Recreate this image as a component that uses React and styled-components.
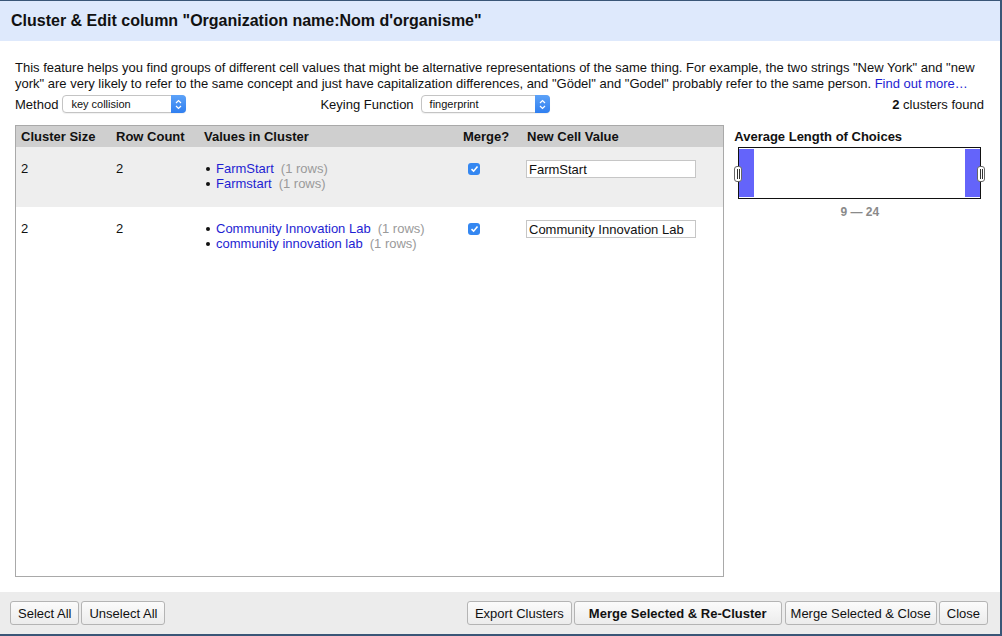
import React from "react";
import styled, { createGlobalStyle } from "styled-components";

const Global = createGlobalStyle`
  html, body { margin: 0; padding: 0; background: #fff; }
  body { font-family: "Liberation Sans", Arial, Helvetica, sans-serif; font-size: 13px; color: #111; }
  * { box-sizing: border-box; }
`;

const Dialog = styled.div`
  width: 1002px;
  height: 636px;
  border-top: 1px solid #3a5677;
  border-right: 2px solid #3a5677;
  border-bottom: 2px solid #3a5677;
  display: flex;
  flex-direction: column;
  background: #fff;
`;

const Header = styled.div`
  height: 40px;
  background: #dee9fc;
  display: flex;
  align-items: center;
  padding-left: 11px;
  font-size: 16px;
  font-weight: bold;
  color: #111;
`;

const Body = styled.div`
  flex: 1;
  display: flex;
  flex-direction: column;
  padding: 19px 16px 15px 15px;
  min-height: 0;
`;

const Intro = styled.p`
  margin: 0;
  line-height: 16px;
  font-size: 13px;
`;

const Link = styled.a`
  color: #1e1ed2;
  text-decoration: none;
`;

const Controls = styled.div`
  display: flex;
  align-items: center;
  margin-top: 3px;
  height: 18px;
`;

const ControlGroup = styled.div`
  display: flex;
  align-items: center;
  gap: ${(p) => p.$gap || 4}px;
  margin-left: ${(p) => p.$offset || 0}px;
`;

const Select = styled.div`
  position: relative;
  width: ${(p) => p.$width}px;
  height: 18px;
  border: 1px solid #c4c4c4;
  border-radius: 4px;
  background: #fff;
  font-size: 11px;
  line-height: 16px;
  padding-left: 8px;
  color: #111;
  box-shadow: 0 1px 1px rgba(0, 0, 0, 0.06);
`;

const SelectArrow = styled.span`
  position: absolute;
  top: -1px;
  right: -1px;
  width: 15px;
  height: 18px;
  border-radius: 0 4px 4px 0;
  background: linear-gradient(#5ca2f8, #2f7ff0);
  display: flex;
  align-items: center;
  justify-content: center;
`;

const Found = styled.div`
  margin-left: auto;
`;

const Main = styled.div`
  flex: 1;
  display: flex;
  gap: 10px;
  margin-top: 12px;
  min-height: 0;
`;

const TablePanel = styled.div`
  width: 710px;
  border: 1px solid #a9a9a9;
  background: #fff;
`;

const Row = styled.div`
  display: grid;
  grid-template-columns: 95px 88px 259px 64px 1fr;
  background: ${(p) => p.$bg};
`;

const HeadCell = styled.div`
  height: 21px;
  line-height: 21px;
  padding: 0 5px;
  font-weight: bold;
  background: #cfcfcf;
`;

const Cell = styled.div`
  padding: 14px 5px 16px;
  line-height: 15px;
  min-height: 60px;
`;

const Values = styled.ul`
  margin: 0;
  padding: 0;
  list-style: none;
`;

const ValueItem = styled.li`
  display: flex;
  align-items: center;
  padding-left: 2px;
  &::before {
    content: "";
    width: 4px;
    height: 4px;
    border-radius: 50%;
    background: #111;
    margin-right: 6px;
  }
`;

const ValueName = styled.span`
  color: #1e1ed2;
`;

const ValueCount = styled.span`
  color: #9a9a9a;
  margin-left: 7px;
`;

const Check = styled.span`
  display: inline-flex;
  align-items: center;
  justify-content: center;
  width: 12px;
  height: 12px;
  margin: 1px 0 0 5px;
  border-radius: 3px;
  background: #3487f1;
`;

const CellInput = styled.input`
  width: 170px;
  height: 18px;
  margin: -1px 0 0 -1px;
  border: 1px solid #c6c6c6;
  padding: 0 2px;
  font-family: inherit;
  font-size: 13px;
  color: #111;
  background: #fff;
  outline: none;
`;

const Side = styled.div`
  display: flex;
  flex-direction: column;
  width: 250px;
`;

const SideTitle = styled.div`
  font-weight: bold;
  line-height: 21px;
  margin-top: 1px;
`;

const Histogram = styled.div`
  position: relative;
  margin-left: 4px;
  width: 243px;
  height: 52px;
  border: 1px solid #111;
  display: flex;
  justify-content: space-between;
  background: #fff;
`;

const Bar = styled.div`
  width: 15px;
  margin: 1px 0;
  background: #6464fa;
`;

const Handle = styled.span`
  position: absolute;
  top: 18px;
  ${(p) => (p.$side === "left" ? "left: -5px;" : "right: -5px;")}
  width: 8px;
  height: 16px;
  border: 1px solid #666;
  border-radius: 3px;
  background: #fff;
  display: flex;
  justify-content: center;
  align-items: center;
  gap: 1px;
  &::before, &::after {
    content: "";
    width: 1px;
    height: 10px;
    background: #333;
  }
`;

const Range = styled.div`
  margin-left: 4px;
  width: 243px;
  text-align: center;
  color: #8a8a8a;
  font-weight: bold;
  font-size: 12px;
  margin-top: 6px;
`;

const Footer = styled.div`
  height: 42px;
  background: #ececec;
  display: flex;
  align-items: center;
  padding: 0 12px 0 10px;
  gap: 2px;
`;

const Spacer = styled.div`
  flex: 1;
`;

const Button = styled.button`
  height: 24px;
  padding: 0 ${(p) => p.$pad ?? 7}px;
  font-family: inherit;
  font-size: 13px;
  font-weight: ${(p) => (p.$primary ? "bold" : "normal")};
  color: #111;
  border: 1px solid #b4b4b4;
  border-radius: 3px;
  background: linear-gradient(#fbfbfb, #ececec);
  margin-left: ${(p) => p.$gapLeft || 0}px;
`;

const Arrows = () => (
  <svg width="7" height="11" viewBox="0 0 7 11">
    <path d="M1 4 L3.5 1.5 L6 4 M1 7 L3.5 9.5 L6 7" fill="none" stroke="#fff" strokeWidth="1.2" />
  </svg>
);

const Tick = () => (
  <svg width="9" height="8" viewBox="0 0 9 8">
    <path d="M1.5 4.2 L3.6 6.2 L7.5 1.5" fill="none" stroke="#fff" strokeWidth="1.6" />
  </svg>
);

const clusters = [
  {
    size: 2,
    count: 2,
    values: [
      ["FarmStart", 1],
      ["Farmstart", 1],
    ],
    value: "FarmStart",
    bg: "#eeeeee",
  },
  {
    size: 2,
    count: 2,
    values: [
      ["Community Innovation Lab", 1],
      ["community innovation lab", 1],
    ],
    value: "Community Innovation Lab",
    bg: "#ffffff",
  },
];

export default function App() {
  return (
    <>
      <Global />
      <Dialog>
        <Header>Cluster &amp; Edit column "Organization name:Nom d'organisme"</Header>
        <Body>
          <Intro>
            This feature helps you find groups of different cell values that might be alternative representations of the same thing. For example, the two strings "New York" and "new york" are very likely to refer to the same concept and just have capitalization differences, and "Gödel" and "Godel" probably refer to the same person. <Link href="#">Find out more…</Link>
          </Intro>
          <Controls>
            <ControlGroup>
              <span>Method</span>
              <Select $width={124}>
                key collision
                <SelectArrow><Arrows /></SelectArrow>
              </Select>
            </ControlGroup>
            <ControlGroup $offset={134} $gap={7}>
              <span>Keying Function</span>
              <Select $width={129}>
                fingerprint
                <SelectArrow><Arrows /></SelectArrow>
              </Select>
            </ControlGroup>
            <Found><b>2</b> clusters found</Found>
          </Controls>
          <Main>
            <TablePanel>
              <Row>
                <HeadCell>Cluster Size</HeadCell>
                <HeadCell>Row Count</HeadCell>
                <HeadCell>Values in Cluster</HeadCell>
                <HeadCell>Merge?</HeadCell>
                <HeadCell>New Cell Value</HeadCell>
              </Row>
              {clusters.map((c, i) => (
                <Row key={i} $bg={c.bg}>
                  <Cell>{c.size}</Cell>
                  <Cell>{c.count}</Cell>
                  <Cell>
                    <Values>
                      {c.values.map(([v, n]) => (
                        <ValueItem key={v}>
                          <ValueName>{v}</ValueName>
                          <ValueCount>({n} rows)</ValueCount>
                        </ValueItem>
                      ))}
                    </Values>
                  </Cell>
                  <Cell>
                    <Check><Tick /></Check>
                  </Cell>
                  <Cell>
                    <CellInput defaultValue={c.value} />
                  </Cell>
                </Row>
              ))}
            </TablePanel>
            <Side>
              <SideTitle>Average Length of Choices</SideTitle>
              <Histogram>
                <Bar />
                <Bar />
                <Handle $side="left" />
                <Handle $side="right" />
              </Histogram>
              <Range>9 — 24</Range>
            </Side>
          </Main>
        </Body>
        <Footer>
          <Button>Select All</Button>
          <Button>Unselect All</Button>
          <Spacer />
          <Button>Export Clusters</Button>
          <Button $primary $pad={14}>Merge Selected &amp; Re-Cluster</Button>
          <Button $pad={5} $gapLeft={1}>Merge Selected &amp; Close</Button>
          <Button>Close</Button>
        </Footer>
      </Dialog>
    </>
  );
}
